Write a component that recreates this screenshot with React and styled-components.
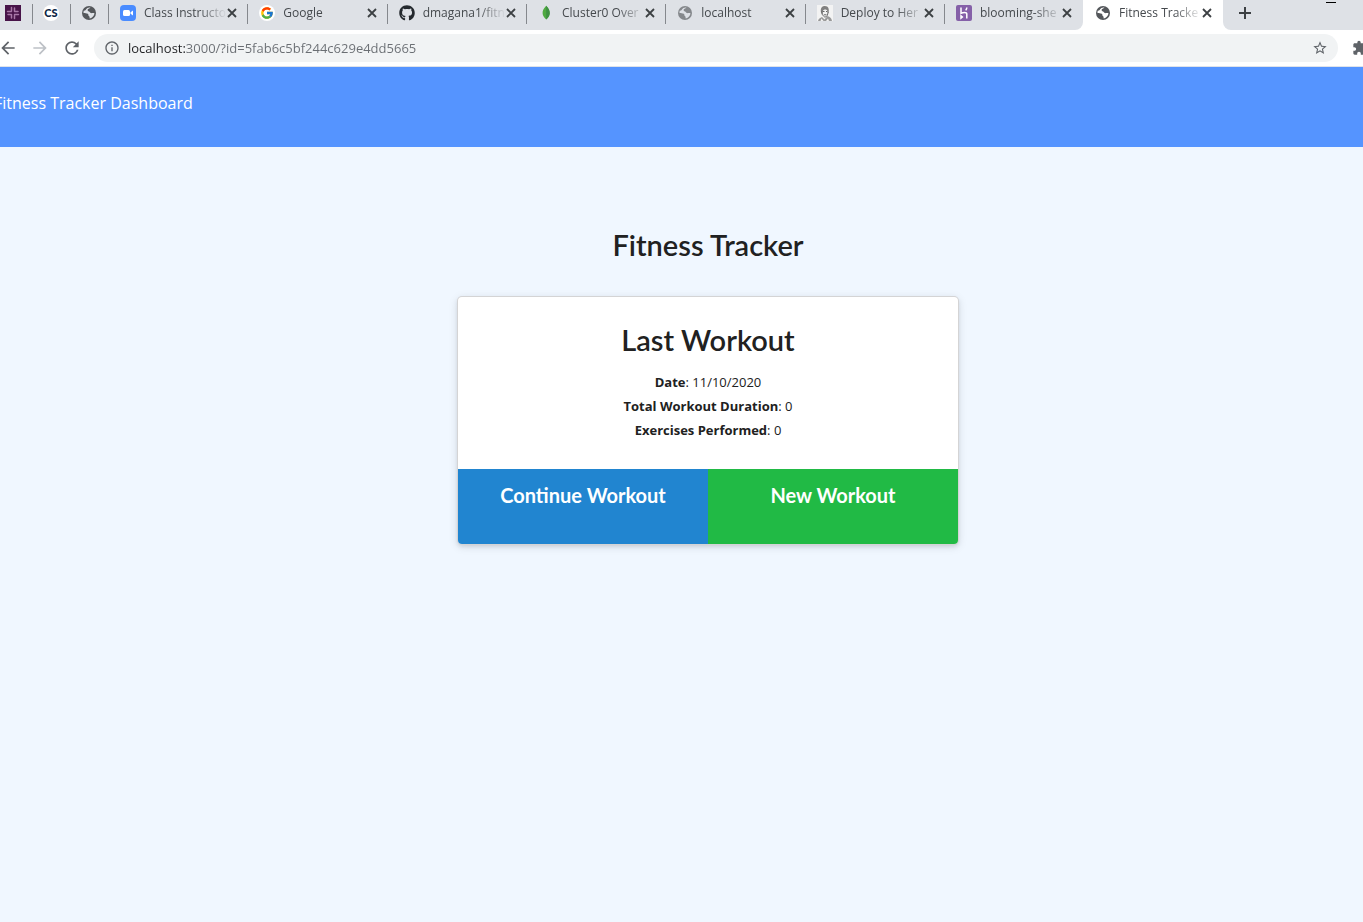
import React from "react";
import styled, { createGlobalStyle } from "styled-components";
import { MdArrowBack, MdArrowForward, MdRefresh, MdInfoOutline, MdStarBorder, MdExtension } from "react-icons/md";
import { FcGoogle } from "react-icons/fc";
import { FaGithub } from "react-icons/fa";

const GlobalStyle = createGlobalStyle`
  *, *::before, *::after { box-sizing: border-box; }
  body {
    margin: 0;
    background: #f0f7ff;
    color: #212121;
    font-family: "Open Sans", "Noto Sans", sans-serif;
    font-size: 13px;
    overflow-x: hidden;
  }
  button, input { font: inherit; border: 0; padding: 0; background: none; }
  a { color: inherit; text-decoration: none; }
`;

const TabStrip = styled.div`
  display: flex;
  height: 30px;
  background: #fff;
`;

const TabGroup = styled.div`
  display: flex;
  flex: 0 1 1083px;
  min-width: 0;
  background: #dee1e6;
  border-bottom-right-radius: 8px;
`;

const StripEnd = styled.div`
  display: flex;
  flex: 1;
  justify-content: space-between;
  padding: 0 27px 4px 12px;
  background: #dee1e6;
  border-bottom-left-radius: 8px;
`;

const PinnedTab = styled.div`
  display: flex;
  flex: none;
  align-items: center;
  justify-content: ${(p) => (p.$clipped ? "flex-start" : "center")};
  width: ${(p) => (p.$clipped ? "33px" : "38px")};
  padding: 0 2px 4px ${(p) => (p.$clipped ? "5px" : "0")};
  background: linear-gradient(#85888d, #85888d) right 4px / 1px 20px no-repeat;
`;

const tabFlex = (p) => {
  if (p.$active) return "0 0 140px";
  return p.$last ? "0 1 138px" : "1 1 0";
};

const Tab = styled.div`
  display: flex;
  flex: ${tabFlex};
  min-width: 0;
  align-items: center;
  padding: 0 11px 4px ${(p) => (p.$active ? "12px" : "11px")};
  background: ${(p) =>
    p.$active || p.$last
      ? "none"
      : "linear-gradient(#85888d, #85888d) right 4px / 1px 20px no-repeat"};
`;

const TabTitle = styled.span`
  flex: 1;
  min-width: 0;
  margin-left: 8px;
  overflow: hidden;
  white-space: nowrap;
  font-size: 12px;
  line-height: 18px;
  color: #45494d;
  mask-image: linear-gradient(to right, #000 calc(100% - 28px), transparent);
`;

const IconButton = styled.button`
  display: flex;
  flex: none;
  align-items: center;
  justify-content: center;
  width: ${(p) => p.$size || 20}px;
  color: ${(p) => p.$color || "#5f6368"};
`;

const Favicon = styled.svg`
  flex: none;
  width: 16px;
  height: 16px;
`;

const Halo = styled.span`
  display: flex;
  flex: none;
  align-items: center;
  justify-content: center;
  width: 16px;
  height: 16px;
  border-radius: 8px;
  background: #fff;
  color: #0b2545;
  font: 900 11px/16px Lato, sans-serif;
`;

const Toolbar = styled.div`
  display: flex;
  align-items: center;
  gap: 12px;
  height: 37px;
  overflow: hidden;
  background: #fff;
  border-bottom: 1px solid #dfe3ea;
`;

const NavButtons = styled.div`
  display: flex;
  flex: none;
  gap: 12px;
  margin-left: -2px;
`;

const Omnibox = styled.label`
  display: flex;
  flex: 1;
  align-items: center;
  gap: 8px;
  height: 28px;
  padding: 0 10px;
  border-radius: 14px;
  background: #f1f3f4;
  color: #5f6368;
`;

const Address = styled.input`
  flex: 1;
  min-width: 0;
  height: 20px;
  color: transparent;
  background: linear-gradient(to right, #202124 58px, #6a6e73 58px);
  background-clip: text;
  outline: 0;
`;

const Extensions = styled.div`
  flex: none;
  width: 11px;
  height: 16px;
  margin-left: 2px;
  overflow: hidden;
  color: #5f6368;
`;

const Banner = styled.header`
  height: 80px;
  padding: 24px 0;
  overflow: hidden;
  background: #5594ff;
  color: #fff;
  font-size: 16px;
  line-height: 24px;
`;

const BannerLink = styled.a`
  margin-left: -6px;
`;

const Content = styled.main`
  display: flex;
  flex-direction: column;
  align-items: center;
  padding: 80px 0 32px 53px;
`;

const Heading = styled.h1`
  margin: 0;
  font: 600 29px/36px Lato, sans-serif;
`;

const Card = styled.section`
  width: 500px;
  max-width: 100%;
  margin-top: 34px;
  border-radius: 4px;
  overflow: hidden;
  background: #fff;
  text-align: center;
  box-shadow: 0 0 0 1px #d4d4d5, 0 2px 4px rgba(34, 36, 38, 0.12), 0 2px 10px rgba(34, 36, 38, 0.15);
`;

const CardBody = styled.div`
  padding: 25px 16px 27px;
`;

const Stats = styled.div`
  margin-top: 12px;
  line-height: 24px;
`;

const Actions = styled.div`
  display: flex;
`;

const Action = styled.button`
  flex: 1;
  height: 75px;
  padding-bottom: 24px;
  background: ${(p) => p.$color};
  color: #fff;
  font: 700 20px/24px Lato, sans-serif;
`;

const Globe = ({ color = "#54575b", land = "#dee1e6" }) => (
  <Favicon viewBox="0 0 16 16" aria-hidden="true">
    <circle cx="8" cy="8" r="7" fill={color} />
    <path d="M9.500 2.600C8.500 3.600 6.400 3.800 6.600 5.200c.1 1 1.400.8 1.900 1.600.5 1 1.600 1.700 2.700 1.300.8-.3 1.500-.2 2.300.2-.3 2.400-2 4.500-4.700 5.200-.5-.9.200-1.700-.7-2.300-1.200-.6-.3-1.800-1.300-2.500C5.500 7.900 4 8.500 2.500 7.900c-.1-.8.100-1.700.4-2.300 1.200.2 1.800-.5 2.200-1.300.5-1 2.300-2.100 4.400-1.700z" fill={land} />
  </Favicon>
);

const Slack = () => (
  <Favicon viewBox="0 0 16 16" aria-hidden="true">
    <path d="M0 0h16v16H0z" fill="#481449" />
    <path d="M6.500 2.500v3M2.500 6.500h4M9.500 3v3.500M10.500 6.500H13M6.500 9.500V13M3 9.500h2.500M9.500 10.500v3M9.500 9.500h4" fill="none" stroke="#a878a8" strokeWidth="1.500" strokeLinecap="round" />
  </Favicon>
);

const Zoom = () => (
  <Favicon viewBox="0 0 16 16" aria-hidden="true">
    <rect width="16" height="16" rx="4" fill="#4a8cff" />
    <rect x="3" y="5" width="7" height="6" rx="1.500" fill="#fff" />
    <path d="M10.500 7.300L13 5.400v5.200l-2.500-1.900z" fill="#fff" />
  </Favicon>
);

const Leaf = () => (
  <Favicon viewBox="0 0 16 16" aria-hidden="true">
    <path d="M8.200.8C5.200 4 4.500 6 4.600 8.300c.1 2.400 1.500 4.300 3.600 6.300 2.300-2 3.400-4.100 3.500-6.300C11.800 5.800 10.800 3.500 8.200.8z" fill="#4faa41" />
    <path d="M8.200.8v13.800c2.300-2 3.400-4.100 3.500-6.300C11.800 5.800 10.800 3.500 8.200.8z" fill="#3f9142" />
  </Favicon>
);

const Portrait = () => (
  <Favicon viewBox="0 0 16 16" aria-hidden="true">
    <path d="M0 0h16v16H0z" fill="#f3f3f3" />
    <path d="M5 10C3 6.500 3.200 1.200 7.500 1c4-.2 5 3.200 4 7l-.8-.5C10.500 5 9.500 4.500 7.500 4.500 5.500 5 5.800 7 5 10z" fill="#808080" />
    <path d="M5 6c.3 4 1.600 6 3.200 6s2.600-2 2.900-5M6 6.500h1.500M9 6.500h1.500M7 9.800h2.500" fill="none" stroke="#666" />
    <path d="M1 16c.5-2.500 2-3 4-4l2.500 2.500L10.500 11c2.500 1 4 2 4.500 5h-3l-1-2.500L9 16H6.500L4.500 13.500 3.500 16z" fill="#999" />
  </Favicon>
);

const Heroku = () => (
  <Favicon viewBox="0 0 16 16" aria-hidden="true">
    <rect width="16" height="16" rx="2" fill="#8560a8" />
    <path d="M5 2.500v5.700c1.800-.8 5.800-1.600 5.800.8v4.500M10.800 2.500c0 1.200-.4 2-1.100 2.900M5 10.800v2.400l1.400-1.200z" fill="none" stroke="#fff" strokeWidth="1.500" />
  </Favicon>
);

const CloseMark = () => (
  <svg width="10" height="10" viewBox="0 0 10 10" aria-hidden="true">
    <path d="M1 1l8 8M9 1l-8 8" stroke="currentColor" strokeWidth="1.800" />
  </svg>
);

const PlusMark = () => (
  <svg width="12" height="12" viewBox="0 0 12 12" aria-hidden="true">
    <path d="M6 0v12M0 6h12" stroke="currentColor" strokeWidth="2" />
  </svg>
);

const MinimizeMark = () => (
  <svg width="10" height="4" viewBox="0 0 10 4" aria-hidden="true">
    <path d="M0 2.500h10" stroke="#000" />
  </svg>
);

const tabs = [
  { title: "Class Instructo", icon: <Zoom /> },
  { title: "Google", icon: <Halo><FcGoogle size={14} /></Halo> },
  { title: "dmagana1/fitn", icon: <Favicon as={FaGithub} color="#24292e" /> },
  { title: "Cluster0 Over", icon: <Leaf /> },
  { title: "localhost", icon: <Globe color="#85888c" /> },
  { title: "Deploy to Her", icon: <Portrait /> },
  { title: "blooming-she", icon: <Heroku /> },
];

const TabItem = ({ title, icon, ...rest }) => (
  <Tab {...rest}>
    {icon}
    <TabTitle>{title}</TabTitle>
    <IconButton $size={10} $color="#3c4043" aria-label={`Close ${title}`}>
      <CloseMark />
    </IconButton>
  </Tab>
);

export default function App() {
  return (
    <>
      <GlobalStyle />
      <TabStrip>
        <TabGroup>
          <PinnedTab $clipped><Slack /></PinnedTab>
          <PinnedTab><Halo>CS</Halo></PinnedTab>
          <PinnedTab><Globe /></PinnedTab>
          {tabs.map((tab, i) => (
            <TabItem key={tab.title} {...tab} $last={i === tabs.length - 1} />
          ))}
        </TabGroup>
        <TabItem title="Fitness Tracke" icon={<Globe land="#fff" />} $active />
        <StripEnd>
          <IconButton $color="#3c4043" aria-label="New tab"><PlusMark /></IconButton>
          <MinimizeMark />
        </StripEnd>
      </TabStrip>
      <Toolbar>
        <NavButtons>
          <IconButton aria-label="Back"><MdArrowBack size={20} /></IconButton>
          <IconButton $color="#bdc1c6" aria-label="Forward"><MdArrowForward size={20} /></IconButton>
          <IconButton aria-label="Reload"><MdRefresh size={20} /></IconButton>
        </NavButtons>
        <Omnibox>
          <MdInfoOutline size={16} />
          <Address aria-label="Address" defaultValue="localhost:3000/?id=5fab6c5bf244c629e4dd5665" />
          <IconButton $size={16} aria-label="Bookmark this page"><MdStarBorder size={16} /></IconButton>
        </Omnibox>
        <Extensions><MdExtension size={16} /></Extensions>
      </Toolbar>
      <Banner>
        <BannerLink href="#dashboard">Fitness Tracker Dashboard</BannerLink>
      </Banner>
      <Content>
        <Heading>Fitness Tracker</Heading>
        <Card>
          <CardBody>
            <Heading as="h2">Last Workout</Heading>
            <Stats>
              <div><strong>Date</strong>: 11/10/2020</div>
              <div><strong>Total Workout Duration</strong>: 0</div>
              <div><strong>Exercises Performed</strong>: 0</div>
            </Stats>
          </CardBody>
          <Actions>
            <Action $color="#2185d0">Continue Workout</Action>
            <Action $color="#21ba45">New Workout</Action>
          </Actions>
        </Card>
      </Content>
    </>
  );
}
